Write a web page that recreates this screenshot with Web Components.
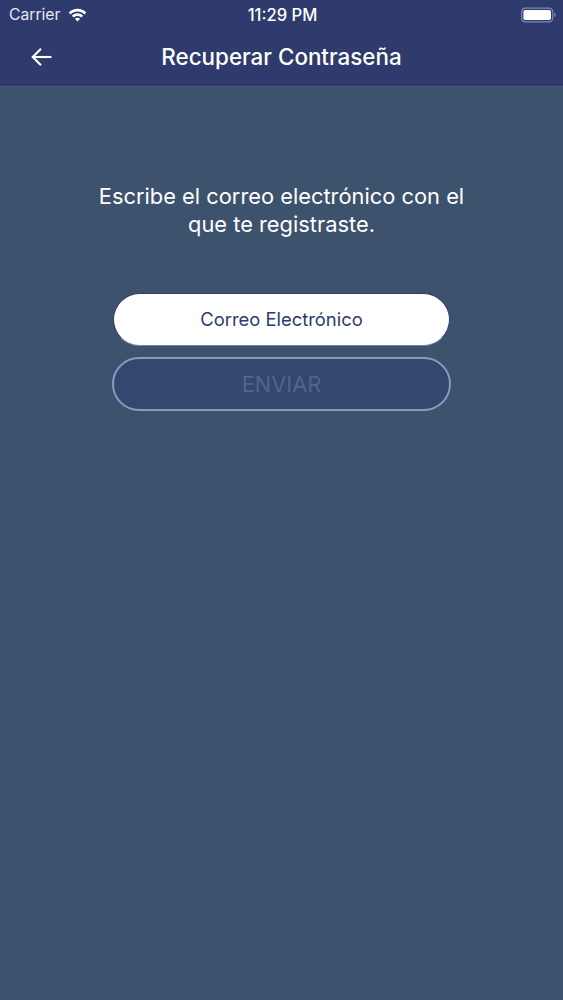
<!DOCTYPE html>
<html lang="es">
<head>
<meta charset="utf-8">
<title>Recuperar Contraseña</title>
<style>
html, body { margin: 0; height: 100%; background: #3d526c; }
body { font-family: Inter, "Liberation Sans", sans-serif; }
</style>
</head>
<body>
<recover-screen>
  <app-header title="Recuperar Contraseña"></app-header>
  <recover-form></recover-form>
</recover-screen>

<script>
const define = (name, html, init) => {
  const template = document.createElement('template')
  template.innerHTML = html
  customElements.define(name, class extends HTMLElement {
    constructor() {
      super()
      this.attachShadow({ mode: 'open' }).appendChild(template.content.cloneNode(true))
    }
    connectedCallback() {
      if (init) init(this)
    }
  })
}

define('recover-screen', `
<style>
:host { display: flex; flex-direction: column; width: 563px; height: 1000px; background: #3d526c; overflow: hidden; }
</style>
<slot></slot>`)

define('status-bar', `
<style>
:host { display: grid; grid-template-columns: 1fr auto 1fr; align-items: center; height: 29px; padding: 0 7px 0 9px; color: #fff; font-size: 15.7px; }
.left { display: flex; align-items: center; gap: 8px; color: #e6e9f2; }
.time { font-weight: 500; font-size: 16.6px; }
.right { display: flex; justify-content: flex-end; }
svg { display: block; }
</style>
<div class="left">
  <span>Carrier</span>
  <svg width="19" height="14" viewBox="0 0 20 15" fill="#fff">
    <path d="M0.6 4.9 C5.8 -0.4 14.2 -0.4 19.4 4.9 L17.4 6.9 C13.3 2.8 6.7 2.8 2.6 6.9 Z"/>
    <path d="M4 8.2 C7.4 4.9 12.6 4.9 16 8.2 L14 10.2 C11.7 8 8.3 8 6 10.2 Z"/>
    <path d="M7.3 11.5 C8.9 10.1 11.1 10.1 12.7 11.5 L10 14.4 Z"/>
  </svg>
</div>
<div class="time">11:29 PM</div>
<div class="right">
  <svg width="35" height="16" viewBox="0 0 35 16">
    <rect x="0.7" y="1.2" width="31" height="13.6" rx="3.6" fill="none" stroke="#7f8bb5" stroke-width="1.2"/>
    <rect x="2.4" y="2.9" width="27.6" height="10.2" rx="2" fill="#fff"/>
    <path d="M33.2 5.8 C34.2 6.1 34.6 7 34.6 8 C34.6 9 34.2 9.9 33.2 10.2 Z" fill="#7f8bb5"/>
  </svg>
</div>`)

define('app-header', `
<style>
:host { display: block; height: 86px; background: #2f3b6c; border-bottom: 1px solid #46597f; box-sizing: content-box; }
.bar { display: grid; grid-template-columns: 84px 1fr 84px; align-items: center; height: 55px; }
.back { display: flex; padding-left: 31px; }
h1 { margin: 0; text-align: center; color: #fff; font-size: 22.4px; font-weight: 550; letter-spacing: 0; white-space: nowrap; }
svg { display: block; }
</style>
<status-bar></status-bar>
<div class="bar">
  <div class="back">
    <svg width="21" height="20" viewBox="0 0 21 20" fill="none" stroke="#fff" stroke-width="2.1">
      <path d="M20.5 10 H2"/>
      <path d="M10 1.7 L1.7 10 L10 18.3"/>
    </svg>
  </div>
  <h1></h1>
  <div></div>
</div>`, el => {
  el.shadowRoot.querySelector('h1').textContent = el.getAttribute('title')
})

define('pill-input', `
<style>
:host { display: flex; align-items: center; justify-content: center; box-sizing: border-box; width: 337px; height: 53px; padding-bottom: 2px; border-radius: 27px; background: #fff; border: 1.5px solid #2f3b6c; border-bottom-color: #7186ac; color: #2f3b6c; font-size: 18.4px; }
</style>
<slot></slot>`)

define('pill-button', `
<style>
:host { display: flex; align-items: center; justify-content: center; box-sizing: border-box; width: 339px; height: 54px; border-radius: 27px; background: #34476f; border: 2px solid #879dbd; color: #50658a; font-size: 21.8px; }
</style>
<slot></slot>`)

define('recover-form', `
<style>
:host { display: flex; flex-direction: column; align-items: center; padding-top: 95px; flex: 1; }
p { margin: 0 0 55px; width: 400px; text-align: center; color: #fff; font-size: 21.85px; line-height: 28px; }
pill-input { margin-bottom: 11px; }
</style>
<p>Escribe el correo electrónico con el<br>que te registraste.</p>
<pill-input>Correo Electrónico</pill-input>
<pill-button>ENVIAR</pill-button>`)
</script>
</body>
</html>
